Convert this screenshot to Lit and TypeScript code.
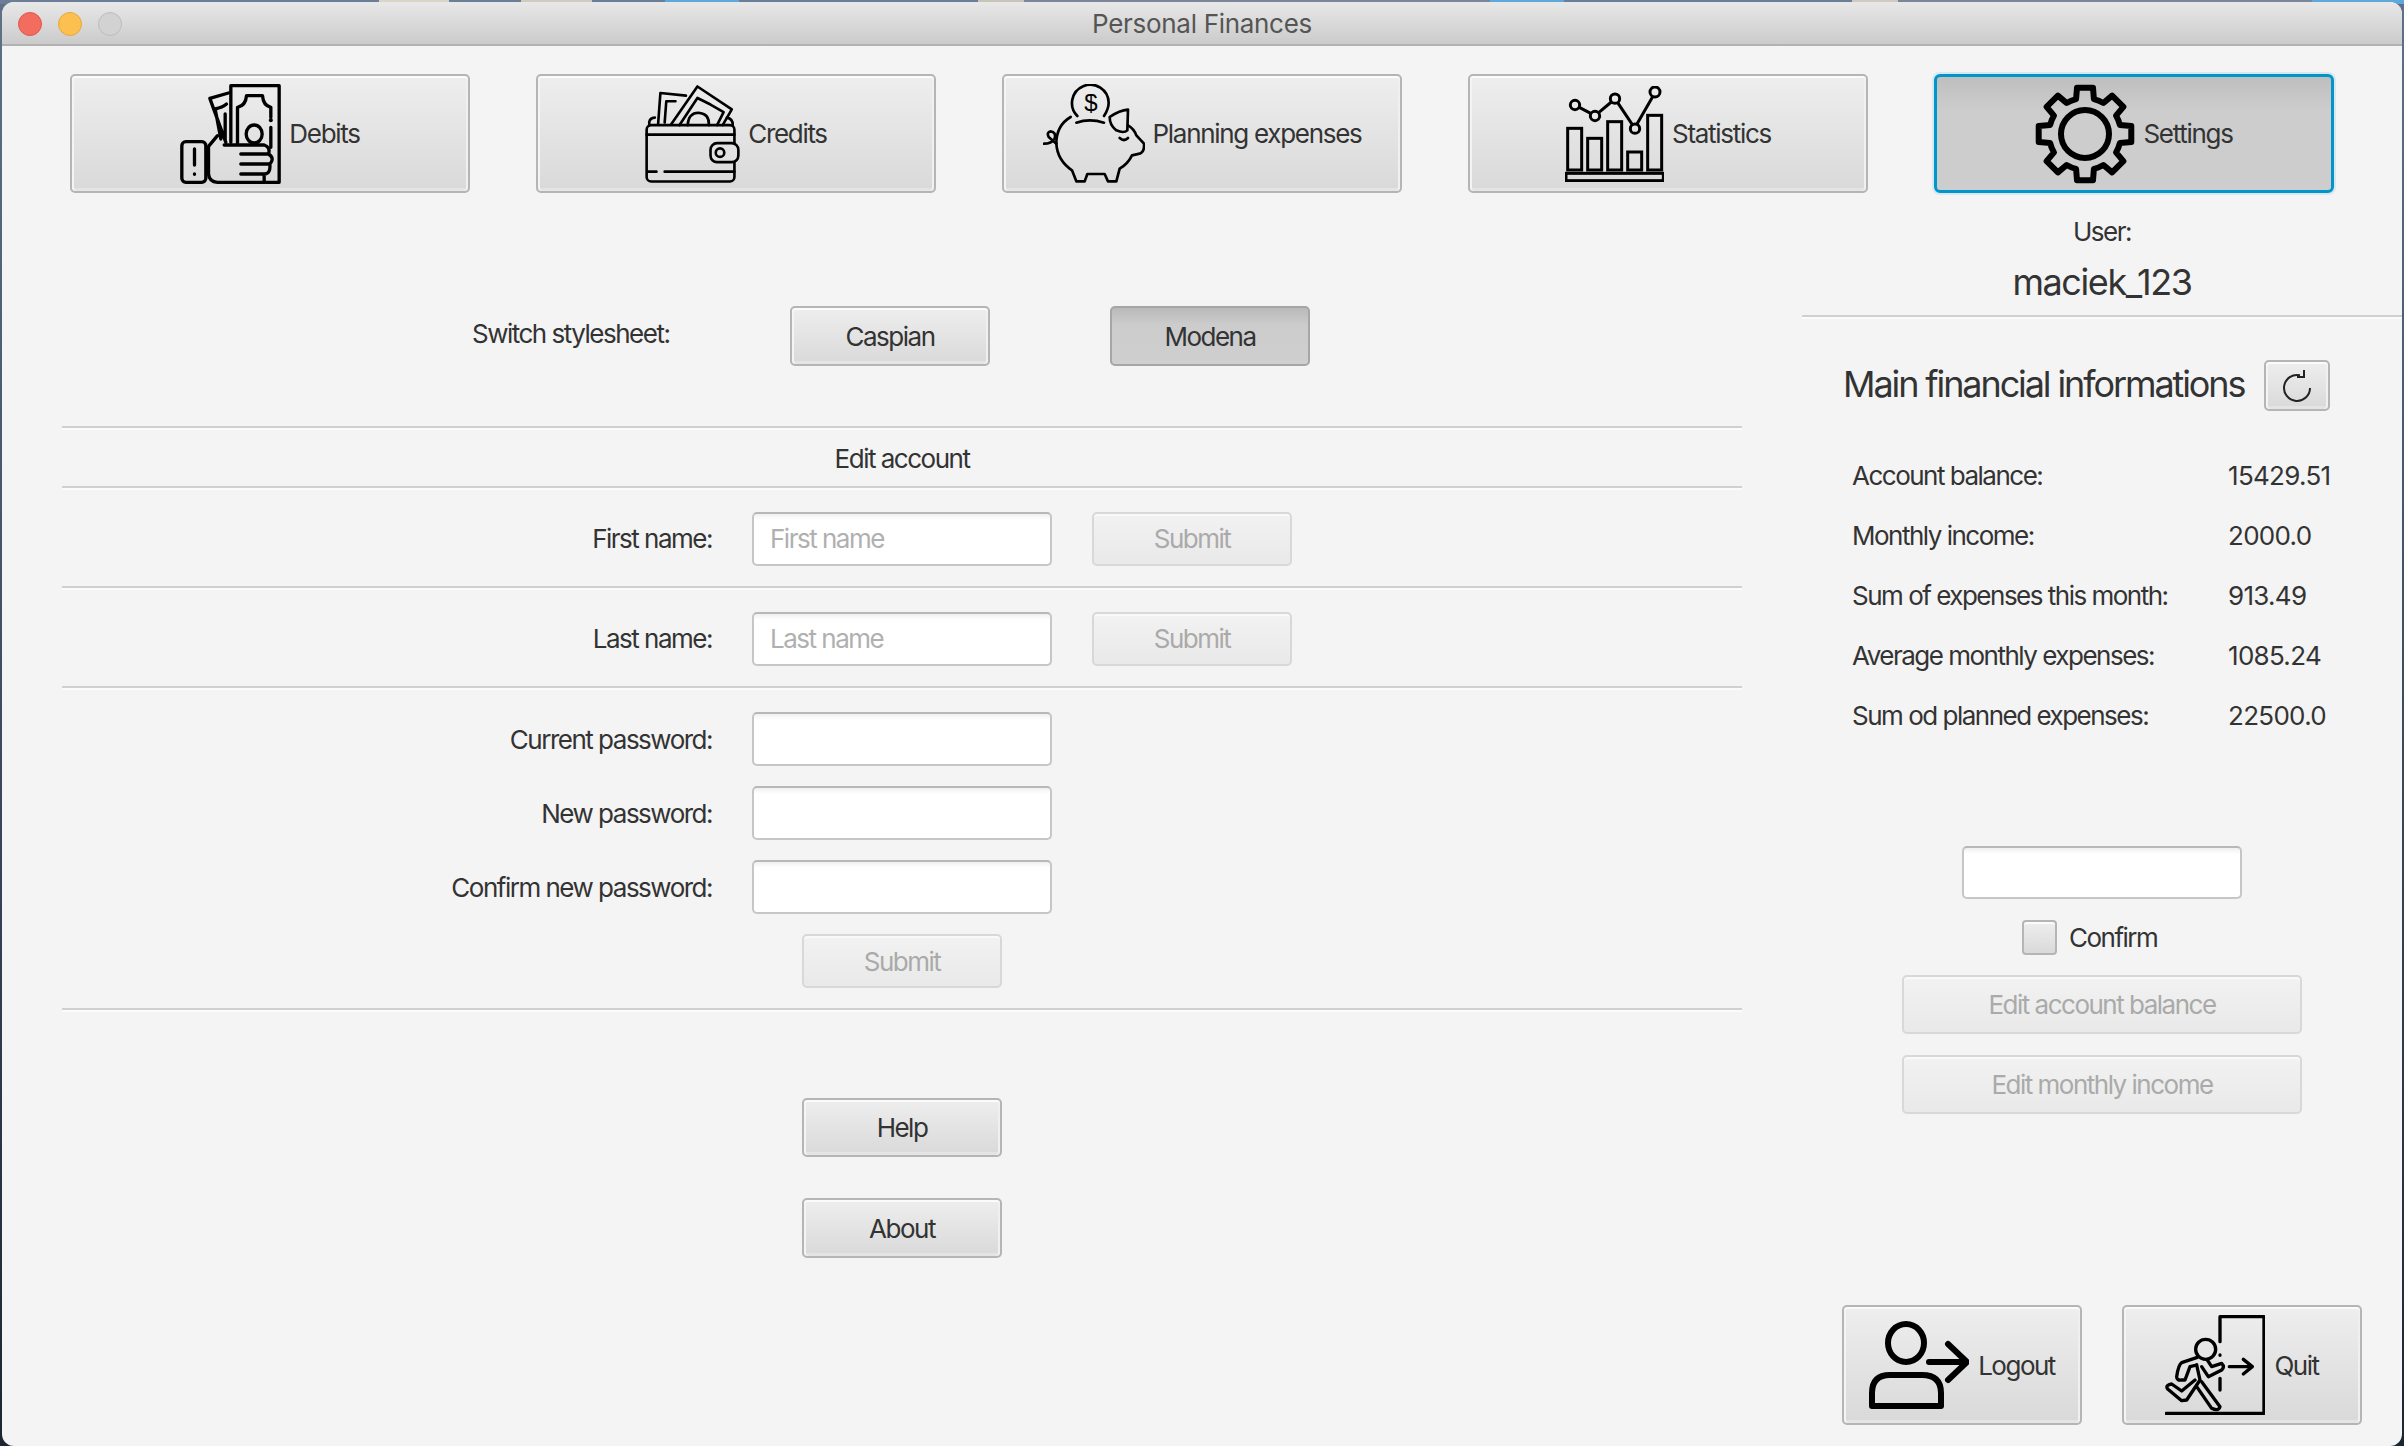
import { LitElement, html, svg, css } from 'lit';
import { customElement } from 'lit/decorators.js';

// eight toothed gear outline, centre 50,50
function gearPath(): string {
  const tip = 47;
  const root = 36;
  const parts: string[] = [];
  for (let i = 0; i < 8; i++) {
    const a = ((i * 45 - 90) * Math.PI) / 180;
    const pt = (r: number, off: number) => {
      const x = 50 + r * Math.cos(a + off);
      const y = 50 + r * Math.sin(a + off);
      return `${x.toFixed(1)} ${y.toFixed(1)}`;
    };
    parts.push(`${i === 0 ? 'M' : 'L'}${pt(root, -0.25)} L${pt(tip, -0.17)} L${pt(tip, 0.17)} L${pt(root, 0.25)}`);
    parts.push(`A${root} ${root} 0 0 1 ${pt(root, Math.PI / 4 - 0.25)}`);
  }
  return parts.join(' ') + ' Z';
}

const debitsIcon = svg`<svg class="icon" width="101" height="100" viewBox="33 25 302 300" fill="none" stroke="#000" stroke-width="10" stroke-linejoin="round" stroke-linecap="round">
  <path d="M185 200V30H330V320H285"/>
  <path d="M205 205V95Q230 90 232 60H280Q282 90 305 95V125M305 155V215"/>
  <path d="M305 133v1" stroke-width="12"/>
  <ellipse cx="255" cy="175" rx="24" ry="27"/>
  <path d="M170 200L122 68L178 52M155 190L138 100Q160 95 172 85M168 195V115"/>
  <rect x="38" y="198" width="72" height="122" rx="12"/>
  <path d="M76 220V268M76 295v1"/>
  <path d="M118 212L145 180M165 208H285Q305 215 298 235H215M298 235Q318 248 302 265H215M302 265Q305 295 285 295H215M285 295V320H145Q120 318 118 295V212"/>
</svg>`;

const creditsIcon = svg`<svg class="icon" width="95" height="100" viewBox="25 25 290 300" fill="none" stroke="#000" stroke-width="8" stroke-linejoin="round" stroke-linecap="round">
  <path d="M65 145L72 50L150 58M85 140L90 75H118"/>
  <path d="M105 145L185 30L290 100L262 148M130 148L185 65L225 85L265 108L245 148"/>
  <path d="M155 148Q158 110 188 110Q222 112 220 148"/>
  <path d="M38 148V138Q40 126 55 125M275 125Q293 128 293 148"/>
  <rect x="30" y="148" width="268" height="172" rx="14"/>
  <path d="M30 177H298M32 290H60M85 290H298"/>
  <rect x="225" y="203" width="85" height="58" rx="20" fill="#e2e2e2"/>
  <circle cx="254" cy="232" r="13"/>
</svg>`;

const piggyIcon = svg`<svg class="icon" width="102" height="100" viewBox="25 28 306 296" fill="none" stroke="#000" stroke-width="8" stroke-linejoin="round" stroke-linecap="round">
  <path d="M128 122A55 55 0 1 1 222 82Q222 100 208 122"/>
  <text x="168" y="108" text-anchor="middle" font-family="Liberation Sans, sans-serif" font-size="72" fill="#000" stroke="none">$</text>
  <path d="M125 142Q165 128 208 142"/>
  <path d="M108 125Q65 150 65 205Q68 255 112 285L125 318H150L158 296H210L220 318H245L255 280Q280 265 292 240L315 235Q330 230 328 205L305 180Q298 160 280 150"/>
  <path d="M225 125Q255 105 280 103L278 165Q268 175 245 165Q225 150 225 125Z"/>
  <path d="M255 188Q268 200 280 188"/>
  <path d="M28 205Q50 205 60 190Q65 170 48 168Q35 170 42 185L65 205"/>
</svg>`;

const statsIcon = svg`<svg class="icon" width="99" height="96" viewBox="25 30 297 288" fill="none" stroke="#000" stroke-width="9">
  <rect x="33" y="157" width="42" height="125"/>
  <rect x="93" y="187" width="42" height="95"/>
  <rect x="153" y="137" width="42" height="145"/>
  <rect x="213" y="228" width="42" height="54"/>
  <rect x="273" y="118" width="42" height="164"/>
  <rect x="28" y="292" width="292" height="22"/>
  <path d="M68 94L102 112M126 110L164 78M183 80L227 146M241 144L288 62"/>
  <circle cx="55" cy="87" r="14"/>
  <circle cx="115" cy="120" r="14"/>
  <circle cx="175" cy="68" r="14"/>
  <circle cx="235" cy="158" r="14"/>
  <circle cx="295" cy="48" r="15"/>
</svg>`;

const gearIcon = svg`<svg class="icon" width="100" height="100" viewBox="0 0 100 100" fill="none" stroke="#000" stroke-width="6" stroke-linejoin="round">
  <path d=${gearPath()}/>
  <circle cx="50" cy="50" r="24"/>
</svg>`;

const logoutIcon = svg`<svg class="icon" width="100" height="88" viewBox="1869 1320 100 88" fill="none" stroke="#000" stroke-width="6" stroke-linecap="round" stroke-linejoin="round">
  <ellipse cx="1906" cy="1342" rx="18" ry="19"/>
  <path d="M1872 1405V1392Q1872 1374 1890 1374H1922Q1941 1374 1941 1392V1405Z"/>
  <path d="M1929 1361H1966M1948 1343L1967 1361L1948 1379"/>
</svg>`;

const quitIcon = svg`<svg class="icon" width="100" height="100" viewBox="495 15 300 300" fill="none" stroke="#000" stroke-width="10" stroke-linecap="round" stroke-linejoin="round">
  <path d="M660 95V20H792V310H498"/>
  <path d="M660 135v1M660 205V240"/>
  <path d="M688 170H755M730 148L757 170L730 192"/>
  <circle cx="617" cy="118" r="30"/>
  <path d="M592 142L545 158Q535 165 530 200Q530 212 545 210L555 210L570 170L590 165"/>
  <path d="M590 165L600 210L560 270L545 272L503 237Q495 225 515 222L545 243L585 210"/>
  <path d="M605 215L660 290Q655 305 635 295L590 230"/>
  <path d="M622 150L635 170L665 160Q675 170 665 180L625 200L605 170"/>
</svg>`;

const refreshIcon = svg`<svg width="34" height="34" viewBox="0 0 34 34" fill="none" stroke="#222" stroke-width="2">
  <path d="M20 6.3A13 13 0 1 0 30 19"/>
  <path d="M24 1V8H17"/>
</svg>`;

@customElement('app-root')
export class AppRoot extends LitElement {
  static styles = css`
    :host {
      display: block;
      width: 2404px;
      height: 1446px;
      overflow: hidden;
      background:
        linear-gradient(90deg, #6b7d97 0 379px, #d8d4c8 379px 449px, #6b7d97 449px 521px, #cfcbc0 521px 592px,
          #6b7d97 592px 665px, #5fa8dc 665px 739px, #6b7d97 739px 978px, #c8c4ba 978px 1024px, #7b8698 1024px 1490px,
          #5fa8dc 1490px 1564px, #6b7d97 1564px 1852px, #cfcbc0 1852px 1898px, #7b8698 1898px 2312px, #5fa8dc 2312px)
          top / 100% 4px no-repeat,
        linear-gradient(#5f7088, #1b2633);
      font-family: 'Inter', 'Liberation Sans', sans-serif;
      font-size: 26px;
      letter-spacing: -1.5px;
      color: #333;
    }

    .window {
      display: flex;
      flex-direction: column;
      height: 1444px;
      margin: 2px 2px 0;
      border-radius: 12px;
      background: #f4f4f4;
      overflow: hidden;
    }

    .titlebar {
      position: relative;
      flex: none;
      display: flex;
      align-items: center;
      justify-content: center;
      box-sizing: border-box;
      height: 44px;
      background: linear-gradient(#e8e8e8, #cbcbcb);
      border-bottom: 2px solid #b2b2b2;
      color: #555;
      letter-spacing: -0.3px;
    }
    .lights {
      position: absolute;
      left: 16px;
      top: 10px;
      display: flex;
      gap: 16px;
    }
    .light {
      width: 24px;
      height: 24px;
      box-sizing: border-box;
      border-radius: 50%;
      border: 1px solid;
    }
    .red {
      background: #f26d60;
      border-color: #e0574a;
    }
    .yellow {
      background: #fbc04f;
      border-color: #e3a83c;
    }
    .grey {
      background: #d2d2d2;
      border-color: #bcbcbc;
    }

    .nav {
      flex: none;
      display: flex;
      gap: 66px;
      padding: 28px 0 0 68px;
    }

    button {
      box-sizing: border-box;
      display: flex;
      align-items: center;
      justify-content: center;
      padding: 0;
      font: inherit;
      letter-spacing: inherit;
      color: #333;
      border: 2px solid #b5b5b5;
      border-radius: 5px;
      background: linear-gradient(#eeeeee, #d9d9d9);
      box-shadow: inset 0 2px 0 #fbfbfb, inset 2px 0 0 #f4f4f4, inset -2px 0 0 #f0f0f0, inset 0 -3px 0 #e4e4e4;
    }
    button:disabled {
      color: #aaa;
      border-color: #d8d8d8;
      background: linear-gradient(#f2f2f2, #e9e9e9);
      box-shadow: inset 0 2px 0 #f9f9f9;
    }
    .pressed {
      border-color: #a6a6a6;
      background: linear-gradient(#b9b9b9, #cccccc 30%, #cfcfcf);
      box-shadow: none;
    }
    .focused {
      border: 3px solid #0096c9;
      border-radius: 6px;
      background: linear-gradient(#bebebe, #cdcdcd 30%);
      box-shadow: 0 0 0 2px #d6e9f2;
    }

    .tile {
      width: 400px;
      height: 119px;
      gap: 8px;
      letter-spacing: -1.3px;
    }
    .small-tile {
      width: 240px;
      height: 120px;
      gap: 9px;
    }
    .icon {
      flex: none;
      display: block;
    }

    .main {
      flex: 1;
      display: flex;
      gap: 60px;
      padding-left: 60px;
      min-height: 0;
    }
    .left {
      flex: none;
      width: 1680px;
      display: flex;
      flex-direction: column;
      padding-top: 113px;
    }
    .right {
      flex: 1;
      display: flex;
      flex-direction: column;
      align-items: center;
      min-width: 0;
    }

    .stylesheets {
      display: flex;
      align-items: center;
      height: 60px;
      padding-left: 410px;
      margin-bottom: 60px;
    }
    .stylesheets span {
      width: 318px;
      padding-bottom: 6px;
    }
    .stylesheets button {
      width: 200px;
      height: 60px;
      margin-right: 120px;
    }

    .sep {
      flex: none;
      align-self: stretch;
      height: 2px;
      background: #d0d0d0;
      box-shadow: 0 2px 0 #fbfbfb;
    }
    .section-title {
      box-sizing: border-box;
      height: 58px;
      padding-top: 2px;
      display: flex;
      align-items: center;
      justify-content: center;
    }

    .field-row {
      display: grid;
      grid-template-columns: 650px 300px 200px;
      column-gap: 40px;
      align-items: center;
    }
    .field-row label {
      text-align: right;
    }
    .field-row.single {
      box-sizing: border-box;
      height: 98px;
      padding-top: 3px;
    }
    .passwords {
      display: flex;
      flex-direction: column;
      gap: 20px;
      padding: 24px 0 20px;
    }
    .passwords .field-row button {
      grid-column: 2;
      justify-self: center;
    }
    .field-row button {
      width: 200px;
      height: 54px;
    }

    input[type='text'] {
      box-sizing: border-box;
      display: block;
      width: 100%;
      height: 54px;
      padding: 0 16px;
      font: inherit;
      letter-spacing: inherit;
      color: #333;
      background: linear-gradient(#f0f0f0, #fff 6px);
      border: 2px solid #c6c6c6;
      border-top-color: #b8b8b8;
      border-radius: 5px;
      outline: none;
    }
    input::placeholder {
      color: #b0b0b0;
      opacity: 1;
    }

    .help {
      align-self: center;
      width: 200px;
      height: 59px;
      margin-top: 88px;
    }
    .about {
      align-self: center;
      width: 200px;
      height: 60px;
      margin-top: 41px;
    }

    .user-label {
      margin-top: 22px;
      line-height: 34px;
    }
    .user-name {
      margin-top: 11px;
      margin-bottom: 11px;
      line-height: 44px;
      font-size: 36px;
      letter-spacing: -1.4px;
    }
    .info-head {
      align-self: stretch;
      display: flex;
      align-items: center;
      gap: 21px;
      margin-top: 43px;
      padding-left: 41px;
    }
    .info-head h2 {
      width: 400px;
      margin: 0;
      padding-bottom: 4px;
      font-size: 36px;
      font-weight: 400;
      white-space: nowrap;
      letter-spacing: -2.1px;
    }
    .refresh {
      width: 66px;
      height: 51px;
    }

    .stats {
      align-self: stretch;
      display: grid;
      grid-template-columns: 376px 1fr;
      grid-auto-rows: 60px;
      align-items: center;
      margin-top: 34px;
      padding-left: 50px;
    }
    .value {
      letter-spacing: -0.7px;
    }

    .amount {
      width: 280px;
      margin-top: 101px;
      height: 53px;
    }
    .amount input {
      height: 53px;
    }
    .confirm {
      align-self: stretch;
      display: flex;
      align-items: center;
      gap: 12px;
      margin-top: 21px;
      padding-left: 220px;
    }
    .check {
      box-sizing: border-box;
      width: 35px;
      height: 35px;
      border: 2px solid #b5b5b5;
      border-radius: 4px;
      background: linear-gradient(#eeeeee, #d9d9d9);
      box-shadow: inset 0 2px 0 #fbfbfb;
    }
    .wide {
      width: 400px;
      height: 59px;
      margin-top: 20px;
    }
    .wide + .wide {
      margin-top: 21px;
    }
    .exit {
      align-self: stretch;
      display: flex;
      gap: 40px;
      margin-top: 191px;
      padding-left: 40px;
    }
  `;

  private stats = [
    ['Account balance:', '15429.51'],
    ['Monthly income:', '2000.0'],
    ['Sum of expenses this month:', '913.49'],
    ['Average monthly expenses:', '1085.24'],
    ['Sum od planned expenses:', '22500.0'],
  ];

  protected render() {
    return html`
      <div class="window">
        <div class="titlebar">
          <div class="lights">
            <div class="light red"></div>
            <div class="light yellow"></div>
            <div class="light grey"></div>
          </div>
          Personal Finances
        </div>
        <div class="nav">
          <button class="tile">${debitsIcon}Debits</button>
          <button class="tile">${creditsIcon}Credits</button>
          <button class="tile">${piggyIcon}Planning expenses</button>
          <button class="tile">${statsIcon}Statistics</button>
          <button class="tile focused">${gearIcon}Settings</button>
        </div>
        <div class="main">
          <div class="left">
            <div class="stylesheets">
              <span>Switch stylesheet:</span>
              <button>Caspian</button>
              <button class="pressed">Modena</button>
            </div>
            <div class="sep"></div>
            <div class="section-title">Edit account</div>
            <div class="sep"></div>
            <div class="field-row single">
              <label>First name:</label>
              <input type="text" placeholder="First name" />
              <button disabled>Submit</button>
            </div>
            <div class="sep"></div>
            <div class="field-row single">
              <label>Last name:</label>
              <input type="text" placeholder="Last name" />
              <button disabled>Submit</button>
            </div>
            <div class="sep"></div>
            <div class="passwords">
              <div class="field-row"><label>Current password:</label><input type="text" /></div>
              <div class="field-row"><label>New password:</label><input type="text" /></div>
              <div class="field-row"><label>Confirm new password:</label><input type="text" /></div>
              <div class="field-row"><button disabled>Submit</button></div>
            </div>
            <div class="sep"></div>
            <button class="help">Help</button>
            <button class="about">About</button>
          </div>
          <div class="right">
            <div class="user-label">User:</div>
            <div class="user-name">maciek_123</div>
            <div class="sep"></div>
            <div class="info-head">
              <h2>Main financial informations</h2>
              <button class="refresh">${refreshIcon}</button>
            </div>
            <div class="stats">
              ${this.stats.map(([k, v]) => html`<span>${k}</span><span class="value">${v}</span>`)}
            </div>
            <div class="amount"><input type="text" /></div>
            <div class="confirm">
              <div class="check"></div>
              <span>Confirm</span>
            </div>
            <button class="wide" disabled>Edit account balance</button>
            <button class="wide" disabled>Edit monthly income</button>
            <div class="exit">
              <button class="small-tile">${logoutIcon}Logout</button>
              <button class="small-tile">${quitIcon}Quit</button>
            </div>
          </div>
        </div>
      </div>
    `;
  }
}

declare global {
  interface HTMLElementTagNameMap {
    'app-root': AppRoot;
  }
}
